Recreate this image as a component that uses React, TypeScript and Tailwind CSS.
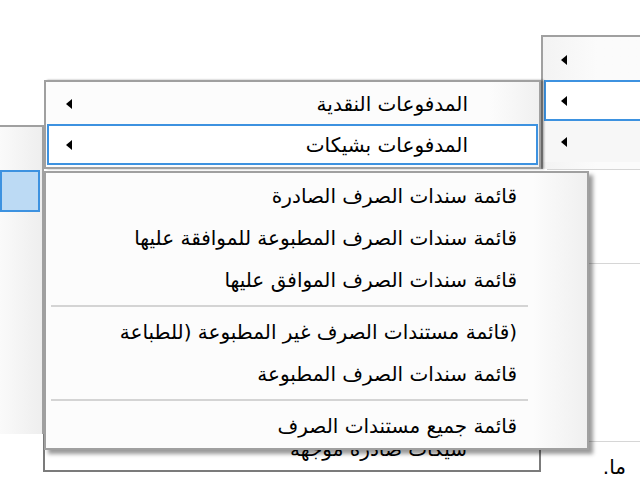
import React from "react";

const FONT = { fontFamily: '"DejaVu Sans", "Noto Sans", sans-serif' };

function Arrow() {
  return (
    <svg width="6" height="10" viewBox="0 0 6 10" className="shrink-0">
      <polygon points="6,0 6,10 0,5" fill="#000" />
    </svg>
  );
}

function Item({ text, h = 42 }: { text: string; h?: number }) {
  return (
    <div
      className="flex items-center justify-start pr-[70px] text-[20px] text-black"
      style={{ height: h }}
      dir="rtl"
    >
      <span className="whitespace-nowrap">{text}</span>
    </div>
  );
}

function Sep() {
  return (
    <div className="flex h-[10px] items-center pl-[5px] pr-[59px]">
      <div className="h-[2px] w-full bg-[#d4d4d4]" />
    </div>
  );
}

export default function App() {
  return (
    <div className="relative h-[480px] w-[640px] overflow-hidden bg-white" style={FONT}>
      {/* background form elements */}
      <div className="absolute left-[547px] top-[169px] h-px w-[93px] bg-[#d6d6d6]" />
      <div className="absolute left-[588px] top-[263px] h-px w-[52px] bg-[#d6d6d6]" />
      <div className="absolute left-[588px] top-[441px] h-px w-[52px] bg-[#d6d6d6]" />
      <div className="absolute right-[14px] top-[452px] text-[20px] text-black" dir="rtl">
        ما.
      </div>

      {/* bottom box behind */}
      <div className="absolute left-[43px] top-[400px] flex h-[72px] w-[498px] items-end justify-start border-2 border-[#7b7b7b] bg-white pb-[6px] pr-[72px]" dir="rtl">
        <span className="text-[20px] text-black">شيكات صادرة موجهة</span>
      </div>

      {/* right-most menu */}
      <div className="absolute left-[541px] top-[35px] h-[134px] w-[110px] border-l-2 border-t-2 border-[#a0a0a0] bg-gradient-to-r from-[#f3f3f3] via-[#fbfbfb] to-[#fbfbfb] pt-[2px]">
        <div className="flex h-[41px] items-center pl-[18px]">
          <Arrow />
        </div>
        <div className="ml-[1px] flex h-[41px] items-center border-2 border-[#3d92e0] bg-white pl-[15px]">
          <Arrow />
        </div>
        <div className="flex h-[41px] items-center bg-[#f7f7f7] pl-[18px]">
          <Arrow />
        </div>
      </div>

      {/* left-most panel */}
      <div className="absolute left-0 top-[125px] h-[309px] w-[44px] border-r-2 border-t-2 border-[#a0a0a0] bg-gradient-to-r from-[#fafafa] to-[#eeeeee] pt-[43px]">
        <div className="h-[42px] w-[40px] border-2 border-[#3d92e0] bg-[#bcdaf4]" />
      </div>

      {/* submenu 2 */}
      <div
        className="absolute left-[44px] top-[80px] w-[497px] border-2 border-[#a0a0a0] px-[1px] pb-[2px] pt-[1px] shadow-[3px_0_2px_rgba(0,0,0,0.35)]"
        style={{ background: "linear-gradient(to right, #fcfcfc 0%, #fcfcfc 90%, #f0f0f0 100%)" }}
      >
        <div className="flex h-[41px] items-center justify-between pl-[19px] pr-[70px]" dir="ltr">
          <Arrow />
          <span className="whitespace-nowrap text-[20px] text-black" dir="rtl">
            المدفوعات النقدية
          </span>
        </div>
        <div className="flex h-[41px] items-center justify-between border-2 border-[#3d92e0] bg-white pl-[17px] pr-[68px]" dir="ltr">
          <Arrow />
          <span className="whitespace-nowrap text-[20px] text-black" dir="rtl">
            المدفوعات بشيكات
          </span>
        </div>
      </div>

      {/* dropdown 3 */}
      <div
        className="absolute left-[44px] top-[171px] w-[545px] border-2 border-[#a0a0a0] pb-[1px] pt-[2px] shadow-[4px_4px_4px_rgba(0,0,0,0.4)]"
        style={{ background: "linear-gradient(to right, #fcfcfc 0%, #fcfcfc 90%, #efefef 100%)" }}
      >
        <Item text="قائمة سندات الصرف الصادرة" />
        <Item text="قائمة سندات الصرف المطبوعة للموافقة عليها" />
        <Item text="قائمة سندات الصرف الموافق عليها" />
        <Sep />
        <Item text="(قائمة مستندات الصرف غير المطبوعة (للطباعة" />
        <Item text="قائمة سندات الصرف المطبوعة" />
        <Sep />
        <Item text="قائمة جميع مستندات الصرف" />
      </div>
    </div>
  );
}
